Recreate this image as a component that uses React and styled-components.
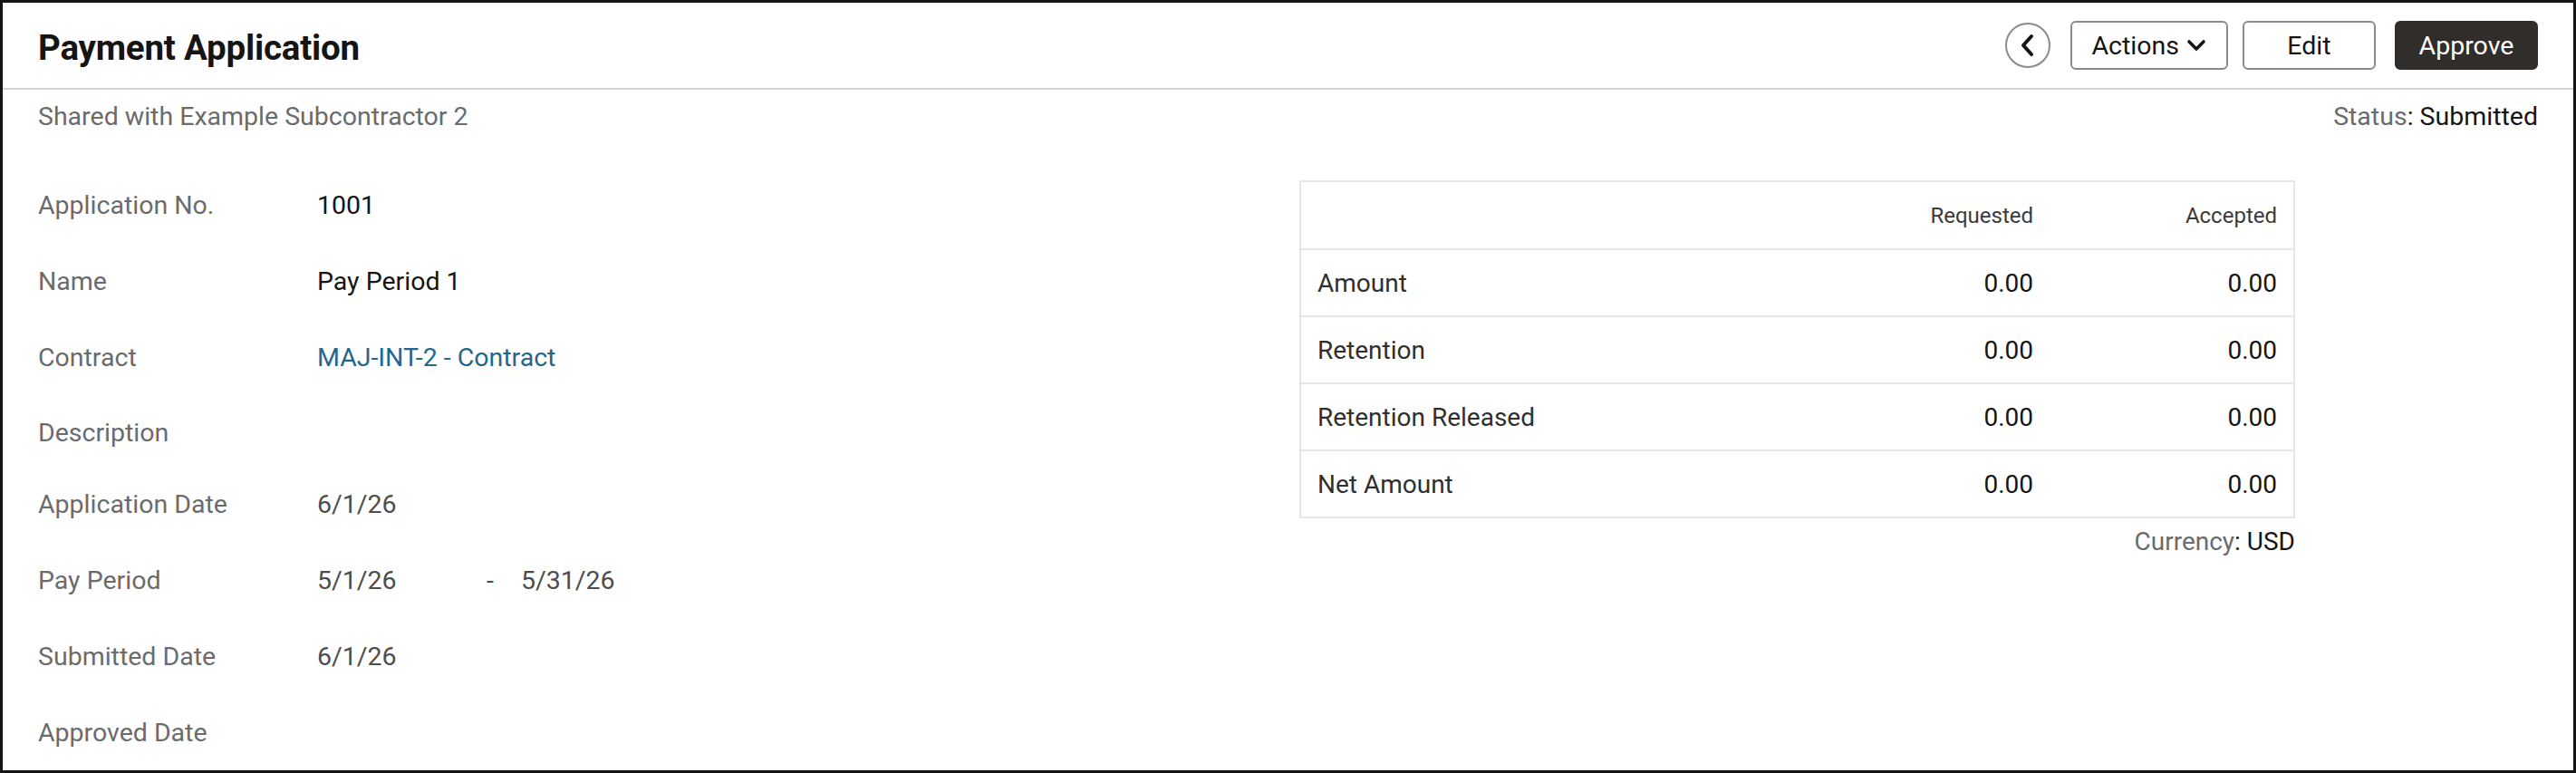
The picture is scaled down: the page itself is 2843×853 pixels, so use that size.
import React from "react";
import styled, { createGlobalStyle } from "styled-components";

const GlobalStyle = createGlobalStyle`
  *, *::before, *::after { box-sizing: border-box; }
  html, body { margin: 0; padding: 0; background: #ffffff; }
  body {
    font-family: Roboto, "Noto Sans", "Liberation Sans", sans-serif;
    color: #161513;
  }
`;

const Frame = styled.div`
  width: 2843px;
  height: 853px;
  border: 3px solid #141414;
  background: #fff;
  display: flex;
  flex-direction: column;
  overflow: hidden;
`;

const Header = styled.header`
  height: 96px;
  padding: 4px 39px 0 39px;
  display: flex;
  align-items: center;
  justify-content: space-between;
  border-bottom: 2px solid #d3d3d3;
  flex-shrink: 0;
`;

const Title = styled.h1`
  margin: 0;
  font-size: 38.5px;
  font-weight: 700;
  color: #161513;
  letter-spacing: -0.2px;
`;

const Toolbar = styled.div`
  display: flex;
  align-items: center;
  gap: 16px;
  margin-top: -4px;
`;

const CircleButton = styled.button`
  width: 50px;
  height: 50px;
  border-radius: 50%;
  border: 2px solid #8b8b8b;
  background: #fff;
  display: flex;
  align-items: center;
  justify-content: center;
  padding: 0;
  margin-right: 6px;
  cursor: pointer;
`;

const Button = styled.button`
  height: 54px;
  min-width: ${(p) => p.$width}px;
  padding: 0 22px;
  margin-left: ${(p) => (p.$primary ? "5px" : "0")};
  border-radius: 6px;
  border: 2px solid ${(p) => (p.$primary ? "#312d2a" : "#8b8b8b")};
  background: ${(p) => (p.$primary ? "#312d2a" : "#ffffff")};
  color: ${(p) => (p.$primary ? "#ffffff" : "#161513")};
  font-family: inherit;
  font-size: 28.5px;
  display: inline-flex;
  align-items: center;
  justify-content: center;
  gap: 8px;
  cursor: pointer;
`;

const SubBar = styled.div`
  height: 50px;
  padding: 10px 39px 0 39px;
  display: flex;
  justify-content: space-between;
  align-items: flex-start;
  flex-shrink: 0;
`;

const Muted = styled.span`
  color: #6b6b6b;
  font-size: 28.5px;
  line-height: 40px;
`;

const Strong = styled.span`
  color: #161513;
`;

const Body = styled.div`
  display: flex;
  padding: 35px 39px 0 39px;
  flex: 1;
`;

const Form = styled.dl`
  margin: 0;
  width: 1392px;
  flex-shrink: 0;
  display: grid;
  grid-template-columns: 308px 1fr;
  align-content: start;
`;

const Label = styled.dt`
  font-size: 28.5px;
  color: #6b6b6b;
  height: ${(p) => (p.$short ? "78px" : "84px")};
  padding-top: ${(p) => (p.$short ? "5px" : "0")};
  display: flex;
  align-items: center;
`;

const Value = styled.dd`
  margin: 0;
  font-size: 28.5px;
  color: ${(p) => (p.$soft ? "#4d4d4d" : "#161513")};
  display: flex;
  align-items: center;
  height: ${(p) => (p.$short ? "78px" : "84px")};
`;

const Link = styled.a`
  color: #22678f;
  text-decoration: none;
`;

const DateText = styled.span`
  display: inline-block;
  width: ${(p) => p.$width}px;
`;

const Dash = styled.span`
  display: inline-block;
  width: 38px;
`;

const Summary = styled.div`
  padding-top: 15px;
  width: 1099px;
  display: flex;
  flex-direction: column;
  align-items: flex-end;
`;

const Table = styled.table`
  width: 100%;
  border-collapse: collapse;
  border: 2px solid #e6e6e6;
`;

const HeadCell = styled.th`
  height: 75px;
  padding: 0 18px;
  font-size: 24px;
  font-weight: 400;
  color: #3a3a3a;
  text-align: right;
  vertical-align: middle;
  border-bottom: 2px solid #e6e6e6;
  width: ${(p) => (p.$width ? `${p.$width}px` : "auto")};
`;

const Row = styled.tr`
  height: 74px;
  border-bottom: 2px solid #e6e6e6;
`;

const Cell = styled.td`
  padding: 0 18px;
  font-size: 28px;
  color: ${(p) => (p.$num ? "#161513" : "#2f2f2f")};
  text-align: ${(p) => (p.$num ? "right" : "left")};
  vertical-align: middle;
`;

const Currency = styled.div`
  margin-top: 8px;
  font-size: 28px;
  line-height: 36px;
  color: #6b6b6b;
`;

function ChevronLeft() {
  return (
    <svg width="22" height="26" viewBox="0 0 22 26" fill="none">
      <path d="M15 3 L6 13 L15 23" stroke="#161513" strokeWidth="4" strokeLinecap="round" strokeLinejoin="round" />
    </svg>
  );
}

function ChevronDown() {
  return (
    <svg width="22" height="16" viewBox="0 0 22 16" fill="none">
      <path d="M3 4 L11 12 L19 4" stroke="#161513" strokeWidth="3.6" strokeLinecap="round" strokeLinejoin="round" />
    </svg>
  );
}

const rows = [
  ["Amount", "0.00", "0.00"],
  ["Retention", "0.00", "0.00"],
  ["Retention Released", "0.00", "0.00"],
  ["Net Amount", "0.00", "0.00"],
];

export default function App() {
  return (
    <>
      <GlobalStyle />
      <Frame>
        <Header>
          <Title>Payment Application</Title>
          <Toolbar>
            <CircleButton aria-label="Back">
              <ChevronLeft />
            </CircleButton>
            <Button $width={171}>
              Actions <ChevronDown />
            </Button>
            <Button $width={147}>Edit</Button>
            <Button $width={158} $primary>
              Approve
            </Button>
          </Toolbar>
        </Header>

        <SubBar>
          <Muted>Shared with Example Subcontractor 2</Muted>
          <Muted>
            Status<Strong>: Submitted</Strong>
          </Muted>
        </SubBar>

        <Body>
          <Form>
            <Label>Application No.</Label>
            <Value>1001</Value>
            <Label>Name</Label>
            <Value>Pay Period 1</Value>
            <Label>Contract</Label>
            <Value>
              <Link href="#">MAJ-INT-2 - Contract</Link>
            </Value>
            <Label $short>Description</Label>
            <Value $short />
            <Label>Application Date</Label>
            <Value $soft>6/1/26</Value>
            <Label>Pay Period</Label>
            <Value $soft>
              <DateText $width={187}>5/1/26</DateText>
              <Dash>-</Dash>
              <DateText $width={150}>5/31/26</DateText>
            </Value>
            <Label>Submitted Date</Label>
            <Value $soft>6/1/26</Value>
            <Label>Approved Date</Label>
            <Value />
          </Form>

          <Summary>
            <Table>
              <thead>
                <tr>
                  <HeadCell />
                  <HeadCell $width={270}>Requested</HeadCell>
                  <HeadCell $width={270}>Accepted</HeadCell>
                </tr>
              </thead>
              <tbody>
                {rows.map(([label, requested, accepted]) => (
                  <Row key={label}>
                    <Cell>{label}</Cell>
                    <Cell $num>{requested}</Cell>
                    <Cell $num>{accepted}</Cell>
                  </Row>
                ))}
              </tbody>
            </Table>
            <Currency>
              Currency<Strong>: USD</Strong>
            </Currency>
          </Summary>
        </Body>
      </Frame>
    </>
  );
}
